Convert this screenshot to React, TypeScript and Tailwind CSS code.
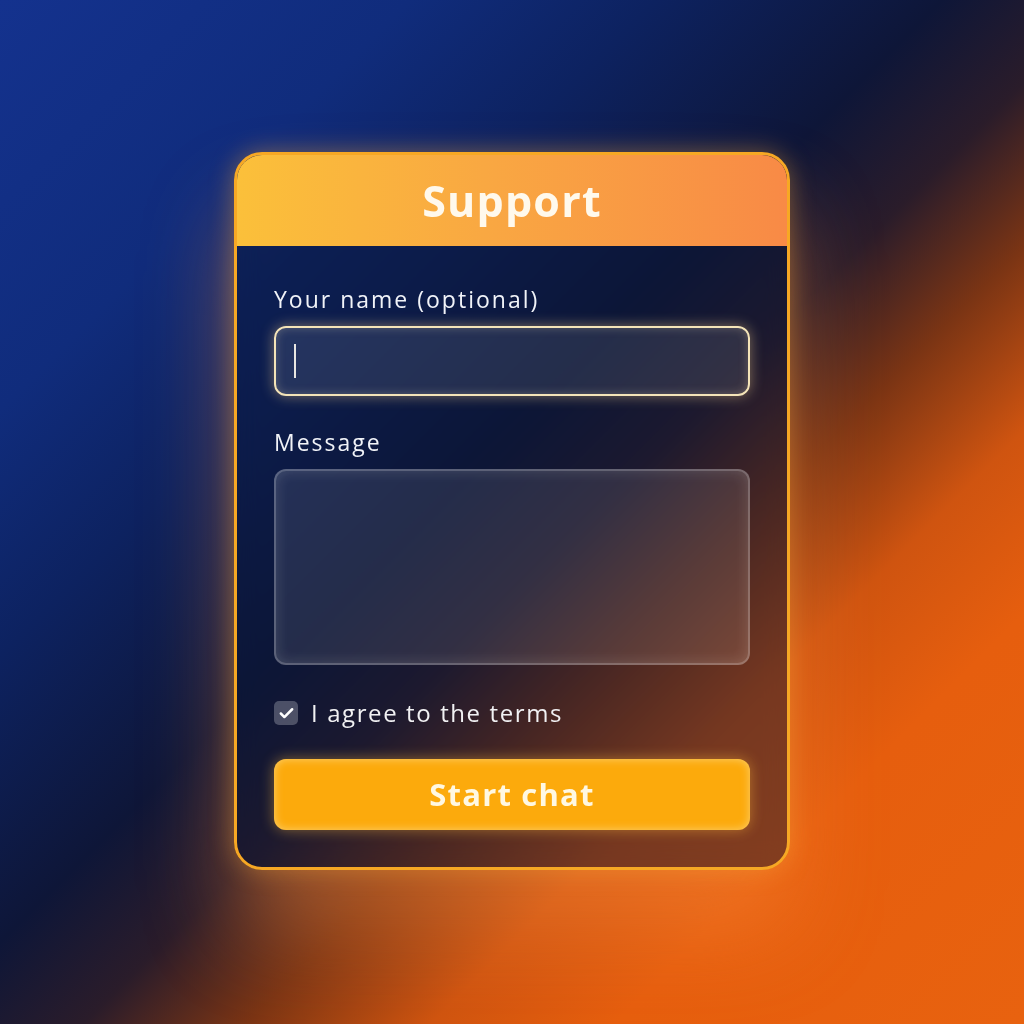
import React, { useState } from 'react';
import { Check } from 'lucide-react';

export default function App() {
  const [agreed, setAgreed] = useState<boolean>(true);

  return (
    <div
      className="min-h-screen w-full flex justify-center pt-[152px] bg-[linear-gradient(135deg,#14328e_0%,#102c7c_20%,#0d2260_32%,#0e1638_46%,#2a1c2a_54%,#7a3414_62%,#cf5410_71%,#e65e0e_80%,#e8620f_100%)]"
      style={{ fontFamily: '"Open Sans", "Noto Sans", sans-serif' }}
    >
      <div className="relative w-[556px] h-[718px] rounded-[28px] border-[3px] border-[#f7a824] overflow-hidden bg-[#0b1636]/45 backdrop-blur-md shadow-[0_0_24px_rgba(250,170,60,0.4),0_60px_90px_rgba(250,140,60,0.45)] flex flex-col">
        {/* header */}
        <div className="h-[91px] shrink-0 flex items-center justify-center bg-[linear-gradient(90deg,#fbc03a_0%,#f9a842_45%,#f88a46_100%)]">
          <h1 className="text-[43px] font-bold text-[#fff9ec] tracking-[1.2px] leading-none">Support</h1>
        </div>

        {/* form body */}
        <div className="flex flex-col px-[37px] pt-[39px]">
          <label className="text-[23px] leading-[28px] text-[#f1f3f8] tracking-[2px]">Your name (optional)</label>
          <div className="mt-[13px] h-[70px] rounded-[12px] border-2 border-[#f4e4b8] bg-white/10 shadow-[0_0_14px_rgba(255,215,140,0.45),inset_0_0_10px_rgba(255,235,190,0.25)] flex items-center pl-[18px]">
            <div className="w-[2px] h-[34px] bg-[#e8e6e2]" />
          </div>

          <label className="mt-[32px] text-[23px] leading-[28px] text-[#f1f3f8] tracking-[2px]">Message</label>
          <div className="mt-[13px] h-[196px] rounded-[12px] border-2 border-white/25 bg-white/10 shadow-[inset_0_0_14px_rgba(255,255,255,0.15)]" />

          <button
            type="button"
            onClick={() => setAgreed(!agreed)}
            className="mt-[34px] flex items-center gap-[13px] text-left"
          >
            <span className="w-[24px] h-[24px] rounded-[5px] bg-white/25 flex items-center justify-center">
              {agreed && <Check size={17} strokeWidth={3.5} className="text-white" />}
            </span>
            <span className="text-[24px] leading-[28px] text-[#f1f1f3] tracking-[1.6px]">I agree to the terms</span>
          </button>

          <button
            type="button"
            className="mt-[32px] h-[71px] rounded-[12px] bg-[#fcaa0c] text-[#fff8e2] text-[31px] font-bold tracking-[1.2px] shadow-[0_0_14px_rgba(255,190,60,0.45),inset_0_0_10px_rgba(255,240,190,0.55)]"
          >
            Start chat
          </button>
        </div>
      </div>
    </div>
  );
}
